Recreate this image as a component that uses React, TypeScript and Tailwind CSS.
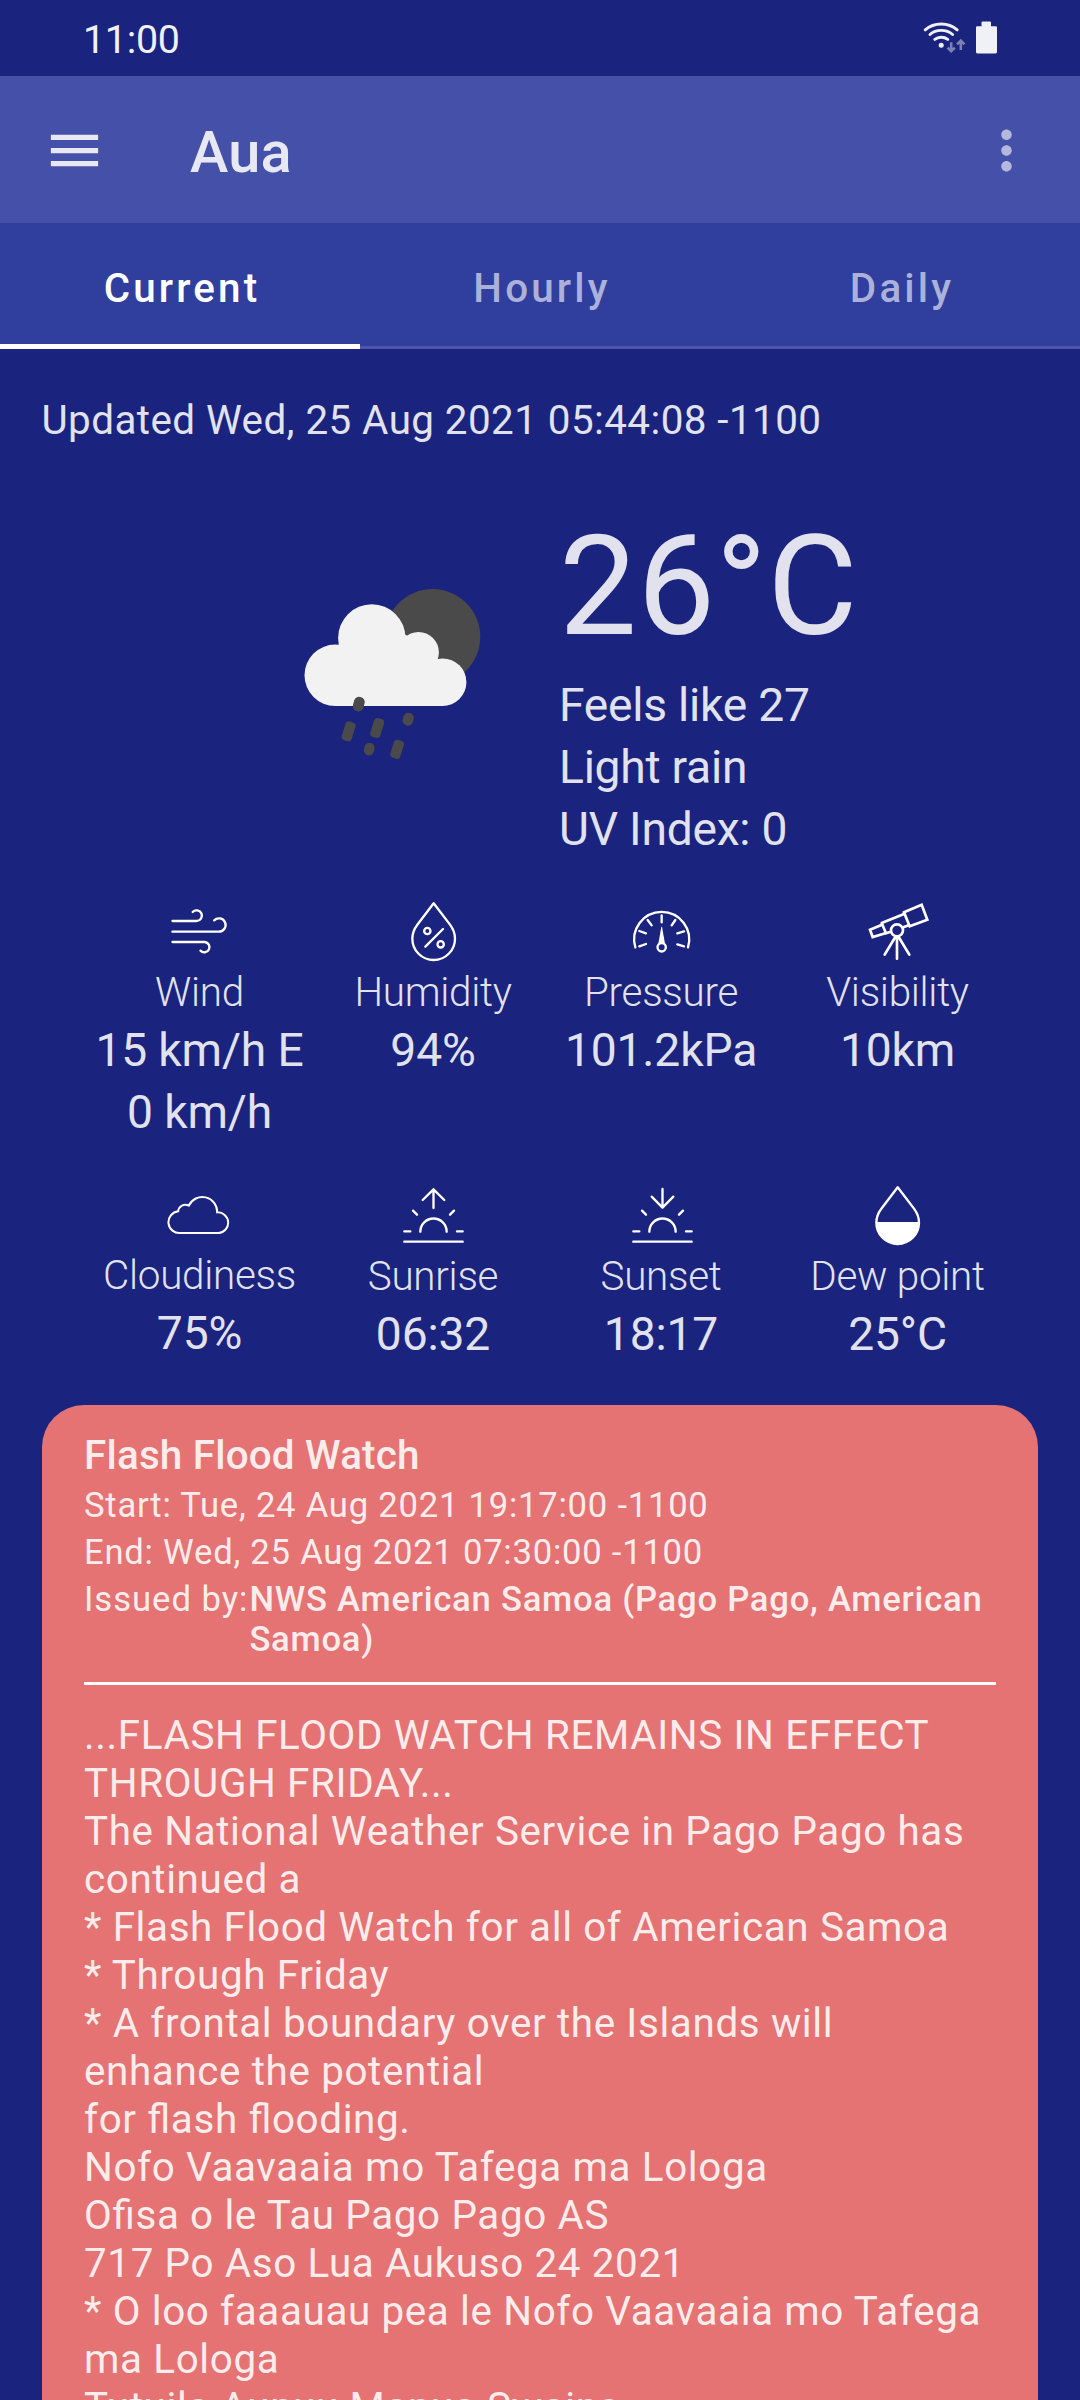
import type { ReactNode } from 'react';

const ALERT_LINES = [
  '...FLASH FLOOD WATCH REMAINS IN EFFECT',
  'THROUGH FRIDAY...',
  'The National Weather Service in Pago Pago has',
  'continued a',
  '* Flash Flood Watch for all of American Samoa',
  '* Through Friday',
  '* A frontal boundary over the Islands will',
  'enhance the potential',
  'for flash flooding.',
  'Nofo Vaavaaia mo Tafega ma Lologa',
  'Ofisa o le Tau Pago Pago AS',
  '717 Po Aso Lua Aukuso 24 2021',
  '* O loo faaauau pea le Nofo Vaavaaia mo Tafega',
  'ma Lologa',
  'Tutuila Aunuu Manua Swains',
];

function StatusIcons() {
  return (
    <svg width="90" height="44" viewBox="915 16 90 44" fill="none">
      <g stroke="#f0f1f6" strokeWidth="2.9" strokeLinecap="round">
        <path d="M925.2 29.9Q932 24 941.2 24T957.2 29.9" />
        <path d="M930 34.5Q934.5 30.4 941.2 30.4T952.6 34.5" />
        <path d="M934.8 39.4Q937.5 37.2 941.2 37.2T947.8 39.4" />
      </g>
      <circle cx="941.2" cy="45.3" r="2.5" fill="#f0f1f6" />
      <g stroke="#7c81b4" strokeWidth="2.6">
        <path d="M951.2 42.2V50.5M947.6 47.6L951.2 51.2L954.9 47.6" />
        <path d="M960.8 50V41.5M957.1 44.3L960.8 40.6L964.4 44.3" />
      </g>
      <path d="M981.5 26.2V22.4Q981.5 21.4 982.5 21.4H990Q991 21.4 991 22.4V26.2H995.6Q997 26.2 997 27.6V52.1Q997 53.5 995.6 53.5H977.4Q976 53.5 976 52.1V27.6Q976 26.2 977.4 26.2Z" fill="#f0f1f6" />
    </svg>
  );
}

function RainCloud() {
  return (
    <svg width="200" height="200" viewBox="290 575 200 200" className="mt-[68px] shrink-0">
      <circle cx="432.5" cy="636.8" r="47.8" fill="#4a4a4b" />
      <g fill="#f2f2f2">
        <circle cx="335.2" cy="675.3" r="30.7" />
        <circle cx="371.8" cy="638" r="33.7" />
        <circle cx="418.5" cy="652.4" r="20.4" />
        <circle cx="442.6" cy="682.2" r="23.8" />
        <path d="M335 706V660L350 645L400 630L430 655L443 665V706Z" />
      </g>
      <g fill="#4a4a4b">
        <rect x="353.4" y="696.8" width="10.8" height="14.6" rx="5" transform="rotate(15 358.8 704)" />
        <rect x="402.9" y="712.8" width="10.6" height="12.8" rx="5" transform="rotate(15 408.2 719.2)" />
        <rect x="343.4" y="721.5" width="10.4" height="19.6" rx="3.6" transform="rotate(17 348.6 731.3)" />
        <rect x="372" y="718.2" width="10.4" height="19.6" rx="3.6" transform="rotate(17 377.2 728)" />
        <rect x="364.1" y="742.8" width="10.2" height="12.6" rx="5" transform="rotate(15 369.2 749.1)" />
        <rect x="391.9" y="740" width="10.4" height="18.6" rx="3.6" transform="rotate(17 397.1 749.3)" />
      </g>
    </svg>
  );
}

function MetricIcon({ box, width = 7, children }: { box: string; width?: number; children: ReactNode }) {
  return (
    <svg width="65" height="65" viewBox={box} fill="none" stroke="#fff" strokeWidth={width} strokeLinecap="round" strokeLinejoin="round">
      {children}
    </svg>
  );
}

const icons = {
  wind: (
    <MetricIcon box="262.5 60 195 195">
      <path d="M279 123H351A16 16 0 1 0 339.5 96" />
      <path d="M279 155H418A20 20 0 1 0 404 121" />
      <path d="M279 186H376A15.5 15.5 0 1 1 363 212" />
    </MetricIcon>
  ),
  humidity: (
    <MetricIcon box="963 60 195 195">
      <path d="M1061 70L1012 134C1003 146 997 160 997 176A64 64 0 0 0 1125 176C1125 160 1119 146 1110 134Z" />
      <circle cx="1042" cy="153" r="9.5" />
      <circle cx="1082" cy="193" r="9.5" />
      <path d="M1036 200L1089 147" />
    </MetricIcon>
  ),
  pressure: (
    <MetricIcon box="267 60 195 195">
      <path d="M286 202A82.5 82.5 0 1 1 444 202" />
      <path d="M365 106V127M323 120L335 136M406 120L395 136M298 153L318 160M432 154L412 160M298 199L318 192M432 199L412 193" />
      <path d="M364 140H366L375 191H355Z" fill="#fff" stroke="none" />
      <circle cx="365" cy="202" r="12.5" fill="#1a237e" />
    </MetricIcon>
  ),
  visibility: (
    <MetricIcon box="975 60 195 195" width={8}>
      <path d="M1092 97L1145 74L1162 119L1109 139Z" strokeLinejoin="miter" />
      <path d="M1092 102L1025 129L1038 160L1050 156M1090 142L1106 136" />
      <path d="M1026 134L990 149L998 171L1036 160" strokeLinejoin="miter" />
      <circle cx="1071" cy="151" r="18" />
      <path d="M1071 170V236M1066 171L1034 224M1076 171L1108 224" />
    </MetricIcon>
  ),
  cloud: (
    <MetricIcon box="262.5 69 195 195" width={6}>
      <path d="M303 219A32 32 0 0 1 296 154A21.500 21.500 0 0 1 328 137A44.500 44.500 0 0 1 413 157A31 31 0 1 1 417 219Z" strokeLinejoin="miter" />
    </MetricIcon>
  ),
  sunrise: (
    <MetricIcon box="963 72 195 195">
      <path d="M973 245H1148M973 214H991M1131 214H1148M1021 215A39.500 39.500 0 0 1 1100 215M999 152L1011 164M1122 152L1110 164M1060.500 144V88M1028 120L1060.500 88L1093 120" />
    </MetricIcon>
  ),
  sunset: (
    <MetricIcon box="267 72 195 195">
      <path d="M280 245H455M280 214H298M438 214H455M328 215A39.500 39.500 0 0 1 407 215M306 152L318 164M429 152L417 164M367.500 87V142M335 110L367.500 143L400 110" />
    </MetricIcon>
  ),
  dew: (
    <MetricIcon box="975 72 195 195">
      <path d="M1073 82L1024 146C1015 158 1009 172 1009 188A64 64 0 0 0 1137 188C1137 172 1131 158 1122 146Z" />
      <path d="M1009 186H1137A64 64 0 0 1 1009 188Z" fill="#fff" stroke="none" />
    </MetricIcon>
  ),
};

function Metric({ icon, label, values, className = '' }: { icon: ReactNode; label: string; values: string[]; className?: string }) {
  return (
    <div className={`flex flex-col items-center whitespace-nowrap ${className}`}>
      {icon}
      <div className="mb-[-1px] text-[40.4px] leading-[55px] font-light tracking-[-0.28px]">{label}</div>
      {values.map((v) => (
        <div key={v} className="text-[46.2px] leading-[62px] tracking-[-0.15px]">{v}</div>
      ))}
    </div>
  );
}

export default function App() {
  return (
    <div className="h-[2400px] w-[1080px] overflow-hidden bg-[#1a237e] font-['Roboto',sans-serif] text-[#e1e2ee]">
      <div className="flex h-[76px] items-center justify-between pr-[75px] pl-[83px]">
        <span className="pt-[3px] text-[39.4px] leading-none tracking-[-0.3px] text-[#f0f1f6]">11:00</span>
        <StatusIcons />
      </div>

      <header className="flex h-[147px] items-center bg-[#4551a8] pt-[2px] pr-[42px] pl-[43px]">
        <svg width="63" height="63" viewBox="0 0 24 24" fill="#e7e8f4">
          <path d="M3 18h18v-2H3v2zm0-5h18v-2H3v2zm0-7v2h18V6H3z" />
        </svg>
        <h1 className="ml-[84px] flex-1 pt-[4px] text-[57.75px] leading-none font-medium tracking-[0.2px] text-[#e7e8f4]">Aua</h1>
        <svg width="63" height="63" viewBox="0 0 24 24" fill="#b4b8dc">
          <path d="M12 8c1.100 0 2-.9 2-2s-.9-2-2-2-2 .9-2 2 .9 2 2 2zm0 2c-1.100 0-2 .9-2 2s.9 2 2 2 2-.9 2-2-.9-2-2-2zm0 6c-1.100 0-2 .9-2 2s.9 2 2 2 2-.9 2-2-.9-2-2-2z" />
        </svg>
      </header>

      <nav className="relative grid h-[126px] grid-cols-3 items-center border-b-[3px] border-[#4c57ab] bg-[#303e9e] pt-[10px] text-center text-[40.4px] leading-none font-medium tracking-[3.15px] text-[#acb1da]">
        <span className="pl-[4px] text-white">Current</span>
        <span className="pl-[4px]">Hourly</span>
        <span className="pl-[4px]">Daily</span>
        <div className="absolute -bottom-[3px] left-0 h-[5px] w-1/3 bg-white" />
      </nav>

      <p className="mt-[48px] ml-[41.500px] text-[40.4px] leading-[48px] tracking-[0.42px] whitespace-nowrap">
        Updated Wed, 25 Aug 2021 05:44:08 -1100
      </p>

      <section className="mt-[62px] flex pl-[290px]">
        <RainCloud />
        <div className="ml-[69px] whitespace-nowrap">
          <div className="text-[138.6px] leading-[160px] tracking-[0.25px]">26°C</div>
          <div className="mt-[7px] text-[46.2px] leading-[62px] tracking-[-0.25px]">
            <div>Feels like 27</div>
            <div>Light rain</div>
            <div>UV Index: 0</div>
          </div>
        </div>
      </section>

      <section className="mt-[40px] ml-[70px] grid grid-cols-[259px_208px_248px_225px] gap-y-[41px]">
        <Metric icon={icons.wind} label="Wind" values={['15 km/h E', '0 km/h']} />
        <Metric icon={icons.humidity} label="Humidity" values={['94%']} />
        <Metric icon={icons.pressure} label="Pressure" values={['101.2kPa']} />
        <Metric icon={icons.visibility} label="Visibility" values={['10km']} />
        <Metric icon={icons.cloud} label="Cloudiness" values={['75%']} className="-mt-px" />
        <Metric icon={icons.sunrise} label="Sunrise" values={['06:32']} />
        <Metric icon={icons.sunset} label="Sunset" values={['18:17']} />
        <Metric icon={icons.dew} label="Dew point" values={['25°C']} />
      </section>

      <article className="mx-[42px] mt-[40px] rounded-t-[42px] bg-[#e57373] px-[42px] pt-[27px] whitespace-nowrap text-[#fcecec]">
        <h2 className="text-[40.4px] leading-[48px] font-medium tracking-[0.19px]">Flash Flood Watch</h2>
        <div className="mt-[2px] text-[34.65px] leading-[47px] tracking-[0.75px]">
          <div>Start: Tue, 24 Aug 2021 19:17:00 -1100</div>
          <div>End: Wed, 25 Aug 2021 07:30:00 -1100</div>
        </div>
        <div className="mt-[3px] flex text-[34.65px] leading-[40px] tracking-[0.75px]">
          <span className="w-[165.4px] shrink-0 tracking-[0.95px]">Issued by:</span>
          <span className="font-medium">
            NWS American Samoa (Pago Pago, American
            <br />
            Samoa)
          </span>
        </div>
        <div className="mt-[23px] h-[3px] bg-white" />
        <div className="mt-[27px] text-[40.4px] leading-[48px] tracking-[0.62px] [font-feature-settings:'liga'_1]">
          {ALERT_LINES.map((line) => (
            <div key={line}>{line}</div>
          ))}
        </div>
      </article>
    </div>
  );
}
